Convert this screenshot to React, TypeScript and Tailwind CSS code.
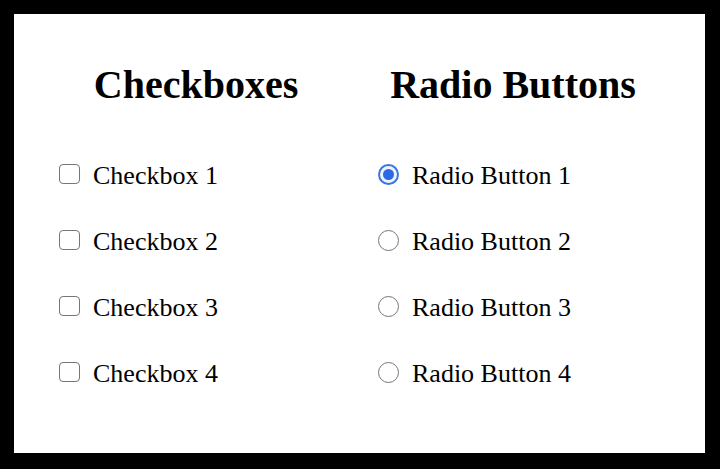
const checkboxes = ['Checkbox 1', 'Checkbox 2', 'Checkbox 3', 'Checkbox 4'];
const radios = ['Radio Button 1', 'Radio Button 2', 'Radio Button 3', 'Radio Button 4'];

function Box() {
  return (
    <span className="mb-1 h-[20px] w-[21px] shrink-0 rounded-[4px] border-[1.5px] border-[#767676] bg-white" />
  );
}

function Radio({ checked }: { checked: boolean }) {
  if (checked) {
    return (
      <span className="mb-1 flex h-[21px] w-[21px] shrink-0 items-center justify-center rounded-full border-2 border-[#3c74e0] bg-[#eef3fd]">
        <span className="h-[11px] w-[11px] rounded-full bg-[#2c67e4]" />
      </span>
    );
  }
  return (
    <span className="mb-1 h-[21px] w-[21px] shrink-0 rounded-full border-[1.5px] border-[#767676] bg-white" />
  );
}

export default function App() {
  return (
    <main className="h-[469px] w-[720px] bg-black pb-[16px] pl-[14px] pr-[15px] pt-[14px] font-['Liberation_Serif',serif] text-black">
      <div className="flex h-[439px] gap-[45px] bg-white pl-[45px] pt-[51px]">
        <section className="w-[274px]">
          <h2 className="text-center text-[40px] font-bold leading-[40px]">Checkboxes</h2>
          <ul className="mt-[38px]">
            {checkboxes.map((label) => (
              <li key={label} className="flex h-[66px] items-center gap-[13px] text-[26px] leading-[26px]">
                <Box />
                <span>{label}</span>
              </li>
            ))}
          </ul>
        </section>

        <section className="w-[270px]">
          <h2 className="text-center text-[40px] font-bold leading-[40px]">Radio Buttons</h2>
          <ul className="mt-[38px]">
            {radios.map((label, i) => (
              <li key={label} className="flex h-[66px] items-center gap-[13px] text-[26px] leading-[26px]">
                <Radio checked={i === 0} />
                <span>{label}</span>
              </li>
            ))}
          </ul>
        </section>
      </div>
    </main>
  );
}
